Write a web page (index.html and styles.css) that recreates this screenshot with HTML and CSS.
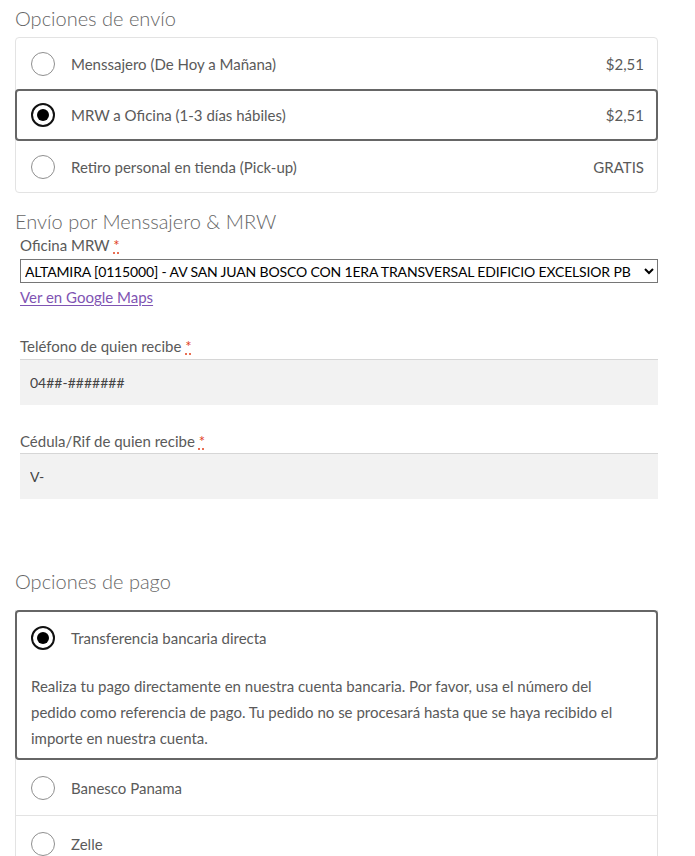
FILE: index.html
```html
<!DOCTYPE html>
<html lang="es">
<head>
<meta charset="utf-8">
<title>Checkout</title>
<link rel="stylesheet" href="styles.css">
</head>
<body>
<main class="checkout">
  <h2 class="section-title first">Opciones de envío</h2>
  <div class="options">
    <div class="option">
      <span class="radio"></span>
      <span class="opt-label">Menssajero (De Hoy a Mañana)</span>
      <span class="opt-price">$2,51</span>
    </div>
    <div class="option selected">
      <span class="radio checked"></span>
      <span class="opt-label">MRW a Oficina (1-3 días hábiles)</span>
      <span class="opt-price">$2,51</span>
    </div>
    <div class="option">
      <span class="radio"></span>
      <span class="opt-label">Retiro personal en tienda (Pick-up)</span>
      <span class="opt-price">GRATIS</span>
    </div>
  </div>

  <h2 class="section-title second">Envío por Menssajero &amp; MRW</h2>
  <div class="fields">
    <label class="field-label">Oficina MRW <abbr class="req" title="obligatorio">*</abbr></label>
    <select class="select">
      <option>ALTAMIRA [0115000] - AV SAN JUAN BOSCO CON 1ERA TRANSVERSAL EDIFICIO EXCELSIOR PB</option>
    </select>
    <a class="maps" href="#">Ver en Google Maps</a>

    <label class="field-label spaced">Teléfono de quien recibe <abbr class="req" title="obligatorio">*</abbr></label>
    <input class="text-input" type="text" value="04##-#######">

    <label class="field-label spaced second-field">Cédula/Rif de quien recibe <abbr class="req" title="obligatorio">*</abbr></label>
    <input class="text-input" type="text" value="V-">
  </div>

  <h2 class="section-title third">Opciones de pago</h2>
  <div class="payments">
    <div class="pay selected">
      <div class="pay-head">
        <span class="radio checked"></span>
        <span class="opt-label">Transferencia bancaria directa</span>
      </div>
      <p class="pay-desc">Realiza tu pago directamente en nuestra cuenta bancaria. Por favor, usa el número del pedido como referencia de pago. Tu pedido no se procesará hasta que se haya recibido el importe en nuestra cuenta.</p>
    </div>
    <div class="pay">
      <div class="pay-head">
        <span class="radio"></span>
        <span class="opt-label">Banesco Panama</span>
      </div>
    </div>
    <div class="pay">
      <div class="pay-head">
        <span class="radio"></span>
        <span class="opt-label">Zelle</span>
      </div>
    </div>
  </div>
</main>
</body>
</html>
```

FILE: styles.css
```css
* { box-sizing: border-box; }

html, body {
  margin: 0;
  padding: 0;
  background: #fff;
}

body {
  font-family: "Lato", "Liberation Sans", sans-serif;
  font-size: 15px;
  color: #555;
  overflow: hidden;
}

.checkout {
  width: 643px;
  margin-left: 15px;
  padding-top: 4px;
}

.section-title {
  margin: 0;
  font-size: 20px;
  font-weight: 300;
  color: #666;
  line-height: 28px;
}

.section-title.first { margin-bottom: 5px; }
.section-title.second { margin-top: 15px; line-height: 26px; }
.section-title.third { margin-top: 68px; margin-bottom: 15px; }

.options {
  border: 1px solid #e3e3e3;
  border-radius: 4px;
}

.option {
  display: flex;
  align-items: center;
  height: 51px;
  padding: 0 13px 0 15px;
}

.option.selected {
  height: 52px;
  margin: 0 -1px;
  padding: 0 12px 0 14px;
  border: 2px solid #666;
  border-radius: 4px;
}

.radio {
  flex: none;
  width: 24px;
  height: 24px;
  border: 1px solid #8f8f8f;
  border-radius: 50%;
  margin-right: 16px;
  display: flex;
  align-items: center;
  justify-content: center;
  background: #fff;
}

.radio.checked {
  border: 2px solid #111;
}

.radio.checked::before {
  content: "";
  width: 12px;
  height: 12px;
  border-radius: 50%;
  background: #000;
}

.opt-label {
  flex: 1;
  color: #5a5a5a;
  line-height: 22px;
}

.opt-price {
  color: #5a5a5a;
}

.fields {
  padding-left: 5px;
  display: flex;
  flex-direction: column;
  align-items: flex-start;
}

.field-label {
  line-height: 22px;
  color: #5a5a5a;
}

.field-label.spaced { margin-top: 27px; margin-bottom: 2px; }
.field-label.spaced.second-field { margin-top: 25px; margin-bottom: 1px; }

.req {
  color: #e2401c;
  text-decoration: underline dotted #e2401c;
  text-underline-offset: 2px;
}

.select {
  margin-top: 3px;
  width: 638px;
  height: 24px;
  font-family: "Lato", "Liberation Sans", sans-serif;
  font-size: 14px;
  letter-spacing: -0.15px;
  color: #000;
  background: #fff;
  border: 1px solid #767676;
  border-radius: 0;
  padding: 0;
}

.maps {
  margin-top: 3px;
  line-height: 22px;
  color: #7f54b3;
  text-decoration: underline;
  text-underline-offset: 2px;
}

.text-input {
  width: 638px;
  height: 46px;
  border: none;
  border-top: 1px solid #d6d6d6;
  background: #f2f2f2;
  padding: 0 10px;
  font-family: "Lato", "Liberation Sans", sans-serif;
  font-size: 14px;
  color: #444;
  outline: none;
}

.payments {
  border-left: 1px solid #e3e3e3;
  border-right: 1px solid #e3e3e3;
}

.pay {
  border-bottom: 1px solid #e3e3e3;
}

.pay.selected {
  margin: 0 -1px;
  border: 2px solid #666;
  border-radius: 4px;
  padding-bottom: 7px;
}

.pay-head {
  display: flex;
  align-items: center;
  height: 55px;
  padding: 0 15px;
}

.pay.selected .pay-head {
  height: 52px;
  padding: 0 14px;
}

.pay-desc {
  margin: 9px 0 0;
  padding: 0 24px 0 14px;
  line-height: 26px;
  color: #5a5a5a;
}
```
